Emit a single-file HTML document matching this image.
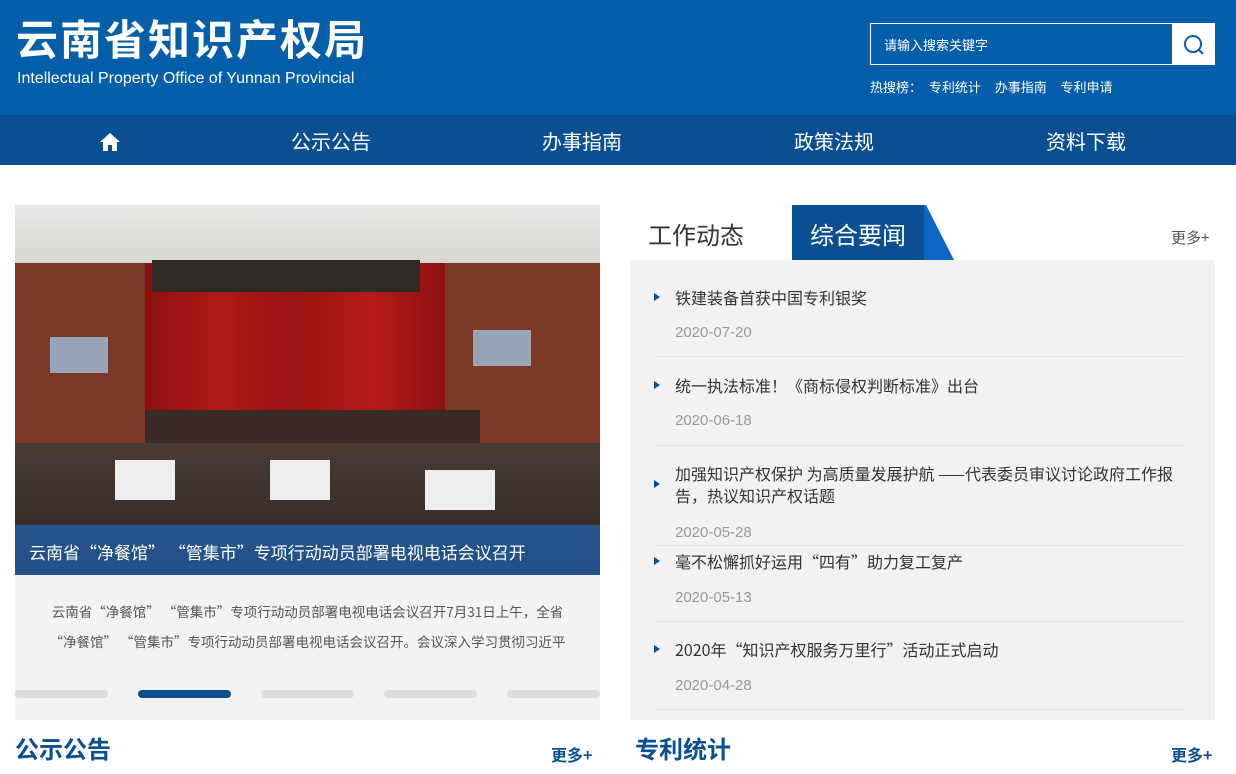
<!DOCTYPE html>
<html><head><meta charset="utf-8">
<style>
*{margin:0;padding:0;box-sizing:border-box}
body{width:1236px;height:774px;overflow:hidden;background:#fff;font-family:"Noto Sans CJK SC","Liberation Sans",sans-serif;position:relative}
.a{position:absolute}
#hd{left:0;top:0;width:1236px;height:115px;background:#055ea9}
#nav{left:0;top:115px;width:1236px;height:50px;background:#0a4f91}
.nv{top:115px;height:50px;line-height:52px;color:#fff;font-size:20px;width:160px;text-align:center}
.news{left:630px;width:585px}
.tt{left:675px;font-size:16px;color:#333;line-height:22px}
.dt{left:675px;font-size:15px;color:#999;font-family:"Liberation Sans",sans-serif}
.ln{left:656px;width:530px;height:1px;background:#e4e4e4}
.ar{left:654px;width:0;height:0;border-left:6px solid #0a4f91;border-top:4px solid transparent;border-bottom:4px solid transparent}
.dot{top:690px;width:93px;height:8px;border-radius:4px;background:#dcdcdc}
</style></head><body>
<div id="hd" class="a"></div>
<div class="a" style="left:16px;top:12px;color:#fff;font-size:42px;font-weight:bold;letter-spacing:2px;line-height:52px">云南省知识产权局</div>
<div class="a" style="left:17px;top:70px;color:#fff;font-size:16px;font-family:'Liberation Sans',sans-serif">Intellectual Property Office of Yunnan Provincial</div>
<div class="a" style="left:870px;top:23px;width:303px;height:42px;border:1px solid #fff;background:#055ea9"></div>
<div class="a" style="left:884px;top:35px;color:#fff;font-size:13px">请输入搜索关键字</div>
<div class="a" style="left:1172px;top:23px;width:43px;height:42px;background:#fff"></div>
<svg class="a" style="left:1182px;top:33px" width="24" height="24" viewBox="0 0 24 24"><circle cx="11" cy="11" r="8" fill="none" stroke="#0a5ea8" stroke-width="2"/><path d="M17 17l4 4" stroke="#0a5ea8" stroke-width="2"/></svg>
<div class="a" style="left:870px;top:77px;color:#fff;font-size:13px;word-spacing:4px">热搜榜： 专利统计&nbsp; 办事指南&nbsp; 专利申请</div>
<div id="nav" class="a"></div>
<svg class="a" style="left:99px;top:132px" width="22" height="20" viewBox="0 0 22 20"><path d="M11 1L1 10h3v9h5v-6h4v6h5v-9h3z" fill="#fff"/></svg>
<div class="a nv" style="left:251px">公示公告</div>
<div class="a nv" style="left:502px">办事指南</div>
<div class="a nv" style="left:754px">政策法规</div>
<div class="a nv" style="left:1006px">资料下载</div>

<div class="a" style="left:15px;top:205px;width:585px;height:370px;overflow:hidden;background:#5a3326">
 <div class="a" style="left:0;top:0;width:585px;height:58px;background:linear-gradient(#e8e8e6,#d8d6d2)"></div>
 <div class="a" style="left:0;top:58px;width:585px;height:180px;background:#7a3a26"></div>
 <div class="a" style="left:130px;top:58px;width:300px;height:160px;background:linear-gradient(90deg,#8e1010,#b01818,#9a1212,#b51a1a,#8e1010)"></div>
 <div class="a" style="left:137px;top:55px;width:268px;height:32px;background:#2f2a26"></div>
 <div class="a" style="left:35px;top:132px;width:58px;height:36px;background:#9aa4b8"></div>
 <div class="a" style="left:458px;top:125px;width:58px;height:36px;background:#9aa4b8"></div>
 <div class="a" style="left:130px;top:205px;width:335px;height:35px;background:#3a2a26"></div>
 <div class="a" style="left:0;top:238px;width:585px;height:132px;background:linear-gradient(#4a3a34,#2b2523)"></div>
 <div class="a" style="left:100px;top:255px;width:60px;height:40px;background:#eee"></div>
 <div class="a" style="left:255px;top:255px;width:60px;height:40px;background:#eee"></div>
 <div class="a" style="left:410px;top:265px;width:70px;height:40px;background:#eee"></div>
 <div class="a" style="left:0;top:320px;width:585px;height:50px;background:rgba(30,100,180,.7)"></div>
 <div class="a" style="left:14px;top:334px;color:#fff;font-size:17px">云南省“净餐馆” “管集市”专项行动动员部署电视电话会议召开</div>
</div>
<div class="a" style="left:15px;top:575px;width:585px;height:145px;background:#f3f3f3"></div>
<div class="a" style="left:15px;top:596px;width:585px;font-size:13.5px;color:#555;line-height:30px;text-align:center;white-space:nowrap">云南省“净餐馆” “管集市”专项行动动员部署电视电话会议召开7月31日上午，全省<br>“净餐馆” “管集市”专项行动动员部署电视电话会议召开。会议深入学习贯彻习近平</div>
<div class="a dot" style="left:15px"></div>
<div class="a dot" style="left:138px;background:#0a4f91"></div>
<div class="a dot" style="left:261px"></div>
<div class="a dot" style="left:384px"></div>
<div class="a dot" style="left:507px"></div>
<div class="a" style="left:15px;top:730px;font-size:24px;font-weight:bold;color:#0a4f91">公示公告</div>
<div class="a" style="left:551px;top:742px;font-size:16px;font-weight:bold;color:#0a4f91">更多+</div>

<div class="a" style="left:648px;top:216px;font-size:24px;color:#333">工作动态</div>
<div class="a" style="left:792px;top:205px;width:133px;height:55px;background:#0a4f91"></div>
<svg class="a" style="left:924px;top:205px" width="32" height="55"><path d="M0 0h2l28 55H0z" fill="#0a66c2"/></svg>
<div class="a" style="left:810px;top:216px;font-size:24px;color:#fff">综合要闻</div>
<div class="a" style="left:1171px;top:227px;font-size:15px;color:#555">更多+</div>
<div class="a news" style="top:260px;height:460px;background:#f2f2f2"></div>
<div class="a ar" style="top:293px"></div><div class="a tt" style="top:286px">铁建装备首获中国专利银奖</div><div class="a dt" style="top:324px">2020-07-20</div><div class="a ln" style="top:356px"></div>
<div class="a ar" style="top:381px"></div><div class="a tt" style="top:374px">统一执法标准！《商标侵权判断标准》出台</div><div class="a dt" style="top:412px">2020-06-18</div><div class="a ln" style="top:445px"></div>
<div class="a ar" style="top:480px"></div><div class="a tt" style="top:462px;width:515px">加强知识产权保护 为高质量发展护航 ——代表委员审议讨论政府工作报告，热议知识产权话题</div><div class="a dt" style="top:524px">2020-05-28</div><div class="a ln" style="top:545px"></div>
<div class="a ar" style="top:557px"></div><div class="a tt" style="top:550px">毫不松懈抓好运用“四有”助力复工复产</div><div class="a dt" style="top:589px">2020-05-13</div><div class="a ln" style="top:621px"></div>
<div class="a ar" style="top:645px"></div><div class="a tt" style="top:638px">2020年“知识产权服务万里行”活动正式启动</div><div class="a dt" style="top:677px">2020-04-28</div><div class="a ln" style="top:709px"></div>
<div class="a" style="left:635px;top:730px;font-size:24px;font-weight:bold;color:#0a4f91">专利统计</div>
<div class="a" style="left:1171px;top:742px;font-size:16px;font-weight:bold;color:#0a4f91">更多+</div>
</body></html>
